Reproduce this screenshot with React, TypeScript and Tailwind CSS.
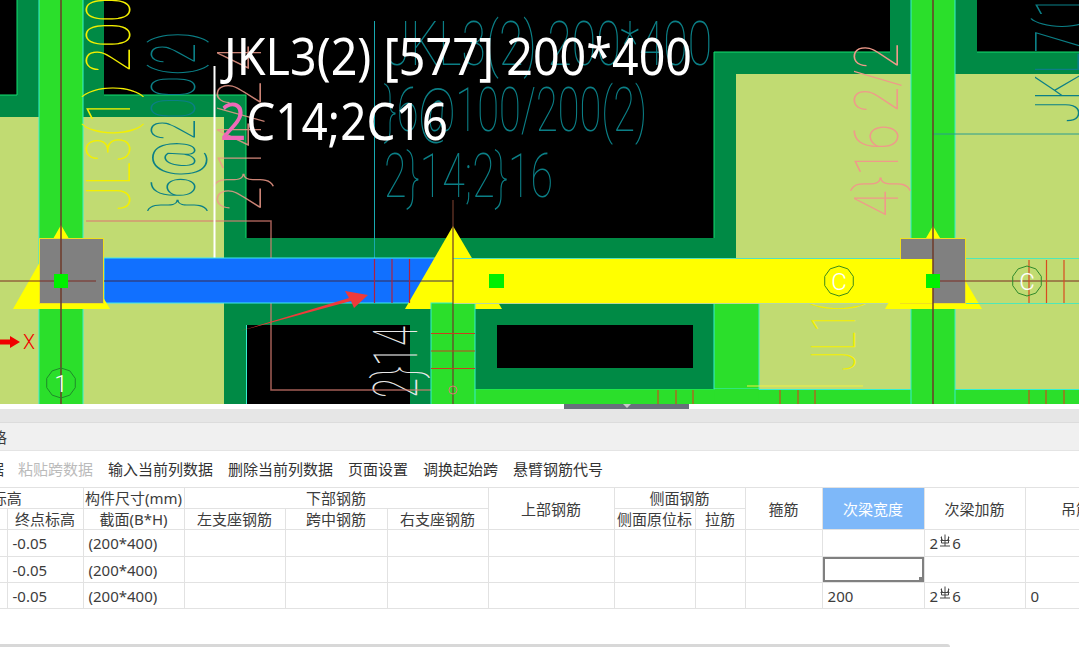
import React from "react";

const TEAL = "#0b7f86";
const SALMON = "#ef9a8a";
const font = "Roboto, 'Liberation Sans', sans-serif";
const bigFont = "'Noto Sans', 'Open Sans', sans-serif";

function Rot({ x, y, len, size, fill, children, opacity = 1 }: { x: number; y: number; len: number; size: number; fill: string; children: string; opacity?: number }) {
  return (
    <text transform={`translate(${x} ${y}) rotate(-90)`} fontFamily={font} fontWeight={100} fontSize={size} fill={fill} opacity={opacity} textLength={len} lengthAdjust="spacingAndGlyphs">
      {children}
    </text>
  );
}

function Flat({ x, y, len, size, fill, children }: { x: number; y: number; len: number; size: number; fill: string; children: string }) {
  return (
    <text x={x} y={y} fontFamily={font} fontWeight={100} fontSize={size} fill={fill} textLength={len} lengthAdjust="spacingAndGlyphs">
      {children}
    </text>
  );
}

function Octagon({ cx, cy, r, stroke }: { cx: number; cy: number; r: number; stroke: string }) {
  const pts = Array.from({ length: 10 }, (_, i) => {
    const a = (i * Math.PI) / 5 + Math.PI / 10;
    return `${cx + r * Math.cos(a)},${cy + r * Math.sin(a)}`;
  }).join(" ");
  return <polygon points={pts} fill="none" stroke={stroke} strokeWidth={1} />;
}

function CadDrawing() {
  const GREEN = "#2bdf2b";
  const DARK = "#008a45";
  const PALE = "#c1db72";
  const CYAN = "#35f0d0";
  const EDGE = "#12e070";
  const LINE = "#6e3a2a";
  return (
    <svg width={1079} height={404} viewBox="0 0 1079 404" className="block">
      <rect width={1079} height={404} fill={DARK} />
      {/* black voids */}
      <polygon points="104,0 890,0 890,52 714,52 714,238 246,238 246,95 104,95" fill="#000" />
      <rect x={0} y={0} width={17} height={95} fill="#000" />
      <rect x={977} y={0} width={102} height={52} fill="#000" />
      <polyline points="0,95 17,95 17,0" fill="none" stroke={EDGE} />
      <polyline points="104,95 246,95 246,238" fill="none" stroke={EDGE} />
      <polyline points="714,238 714,52 890,52" fill="none" stroke={EDGE} />
      <line x1={977} y1={52} x2={1079} y2={52} stroke={EDGE} />
      <rect x={246} y={325} width={164} height={79} fill="#000" />
      <line x1={246.5} y1={325} x2={246.5} y2={404} stroke={CYAN} />
      <rect x={497} y={325} width={196} height={43} fill="#000" />

      {/* pale slabs */}
      <rect x={0} y={117} width={39} height={287} fill={PALE} />
      <rect x={83} y={117} width={141} height={287} fill={PALE} />
      <rect x={736} y={74} width={175} height={184} fill={PALE} />
      <rect x={955} y={74} width={124} height={315} fill={PALE} />
      <rect x={759} y={303} width={152} height={86} fill={PALE} />

      {/* green beams */}
      <rect x={475} y={389} width={604} height={15} fill={GREEN} />
      <rect x={39} y={-2} width={44} height={408} fill={GREEN} stroke={CYAN} />
      <rect x={911} y={-2} width={44} height={408} fill={GREEN} stroke={CYAN} />
      <rect x={714} y={303} width={45} height={86} fill={GREEN} stroke={CYAN} />
      <rect x={714.5} y={389} width={44} height={15} fill={GREEN} />
      <line x1={475} y1={389.5} x2={714} y2={389.5} stroke="#20e848" />
      <line x1={955} y1={389.5} x2={1079} y2={389.5} stroke={CYAN} />
      <line x1={759} y1={389.5} x2={911} y2={389.5} stroke={CYAN} />

      <line x1={933} y1={134} x2={1079} y2={134} stroke="#2a9c90" />

      {/* rotated annotations */}
      <Rot x={130} y={211} len={214} size={62} fill="#f4f000">JL3(1) 200</Rot>
      <Rot x={195} y={211} len={180} size={62} fill={TEAL}>{"}6@200(2)"}</Rot>
      <Rot x={261} y={211} len={165} size={62} fill={SALMON} opacity={0.85}>{"2}14/2 4"}</Rot>
      <Rot x={898} y={217} len={174} size={62} fill={SALMON}>{"4}16 2/2"}</Rot>
      <Rot x={855} y={371} len={70} size={62} fill="#f4f000">JL1(</Rot>
      <Rot x={417} y={398} len={72} size={62} fill="#e8e8e8">{"2}14"}</Rot>
      <Rot x={1079} y={123} len={128} size={62} fill={TEAL}>JKL7(1</Rot>

      {/* horizontal annotations */}
      <Flat x={386} y={65} len={326} size={62} fill={TEAL}>JKL3(2) 200*400</Flat>
      <Flat x={384} y={131} len={263} size={62} fill={TEAL}>{"}6@100/200(2)"}</Flat>
      <Flat x={384} y={197} len={169} size={62} fill={TEAL}>{"2}14;2}16"}</Flat>

      {/* long leaders */}
      <polyline points="86,221 271,221 271,390 449,390" fill="none" stroke="#d97c72" strokeOpacity={0.75} strokeWidth={1.5} />
      <line x1={214.5} y1={66} x2={214.5} y2={258} stroke="#fff" strokeWidth={2} />
      <line x1={374.5} y1={21} x2={374.5} y2={258} stroke="#18a9b0" />

      {/* beam */}
      <rect x={104} y={258} width={350} height={45} fill="#1170ff" stroke="#3fe8f0" />
      {/* left gridline triangle */}
      <polygon points="61,225 13,309 110,309" fill="#ffff00" />
      <rect x={39.5} y={238.5} width={64} height={65} fill="#808080" stroke="#f0e020" />
      {/* middle triangle */}
      <polygon points="453,226 405,309 502,309" fill="#ffff00" />
      <rect x={431} y={303} width={44} height={103} fill={GREEN} stroke={CYAN} />
      <rect x={453} y={259} width={480} height={44} fill="#ffff00" />
      <line x1={453} y1={258.5} x2={933} y2={258.5} stroke="#53e0c0" />
      <line x1={453} y1={303.5} x2={933} y2={303.5} stroke="#b8d8a0" />
      {/* right gridline triangle */}
      <polygon points="933,226 885,309 982,309" fill="#ffff00" />
      <rect x={900.5} y={238.5} width={65} height={65} fill="#808080" stroke="#f0e020" />
      <rect x={900} y={259} width={33} height={44} fill="#ffff00" />
      <line x1={966} y1={258.5} x2={1079} y2={258.5} stroke="#4fe8b8" />
      <line x1={966} y1={303.5} x2={1079} y2={303.5} stroke="#4fe8b8" />

      {/* gridlines */}
      <line x1={61} y1={0} x2={61} y2={404} stroke={LINE} strokeWidth={1.5} />
      <line x1={453} y1={200} x2={453} y2={404} stroke={LINE} strokeWidth={1.2} />
      <line x1={933} y1={0} x2={933} y2={404} stroke={LINE} strokeWidth={1.5} />
      <line x1={0} y1={281} x2={96} y2={281} stroke="#7a2a22" />
      <line x1={104} y1={281} x2={453} y2={281} stroke="#3a2a50" />
      <line x1={940} y1={281} x2={1079} y2={281} stroke="#7a2a22" />

      {/* stirrup ticks */}
      {[374.5, 392, 409.5].map((x) => <line key={x} x1={x} y1={259} x2={x} y2={303} stroke="#b02040" strokeWidth={1.2} />)}
      {[1029, 1046.5, 1064].map((x) => <line key={x} x1={x} y1={260} x2={x} y2={303} stroke="#d84a20" strokeWidth={1.2} />)}
      {[333.5, 351, 368.5].map((y) => <line key={y} x1={431} y1={y} x2={475} y2={y} stroke="#c84020" strokeWidth={1.2} />)}
      {[658, 676, 693, 780, 798, 815, 1029, 1046, 1064].map((x) => <line key={x} x1={x} y1={390} x2={x} y2={404} stroke="#c8501c" strokeWidth={1.2} />)}
      <circle cx={453} cy={390} r={4} fill="none" stroke="#d97c72" />
      <line x1={747} y1={386} x2={863} y2={386} stroke="#f0f040" />

      {/* control points */}
      <rect x={54} y={274} width={14} height={14} fill="#00f000" />
      <rect x={489} y={274} width={15} height={14} fill="#00f000" />
      <rect x={926} y={274} width={14} height={14} fill="#00f000" />

      {/* axis bubbles */}
      <Octagon cx={61} cy={383} r={15} stroke="#1f8a2a" />
      <Octagon cx={839} cy={281} r={15} stroke="#3c8a1a" />
      <Octagon cx={1027} cy={281} r={15} stroke="#2f8a2a" />
      <text x={61} y={392} textAnchor="middle" fontFamily={font} fontSize={24} fontWeight={300} fill="#fff">1</text>
      <text x={839} y={290} textAnchor="middle" fontFamily={font} fontSize={24} fontWeight={300} fill="#fff">C</text>
      <text x={1027} y={290} textAnchor="middle" fontFamily={font} fontSize={24} fontWeight={300} fill="#fff">C</text>

      {/* red annotation arrow */}
      <polygon points="240,331 349,298 345,291 368,295 354,308 351,301" fill="#f03a3a" />

      {/* X axis */}
      <polygon points="0,339.5 10,339.5 10,336 20,342 10,348 10,344.5 0,344.5" fill="#f00000" />
      <text x={23} y={349} fontFamily={font} fontSize={20} fontWeight={300} fill="#f00000" textLength={12} lengthAdjust="spacingAndGlyphs">X</text>

      {/* selected-element tooltip */}
      <text x={224} y={75} fontFamily={bigFont} fontWeight={400} fontSize={51} fill="#fff" textLength={468} lengthAdjust="spacingAndGlyphs">JKL3(2) [577] 200*400</text>
      <text x={220} y={140} fontFamily={bigFont} fontWeight={400} fontSize={51} fill="#fff" textLength={228} lengthAdjust="spacingAndGlyphs">
        <tspan fill="#ee6ab8">2</tspan>C14;2C16
      </text>
    </svg>
  );
}

function RebarSign() {
  return (
    <svg width={12} height={13} viewBox="0 0 12 13" className="inline-block mx-[1px] -translate-y-[3px]" stroke="#444" strokeWidth={1} fill="none">
      <path d="M6 0.5V12M1.5 6.5H10.5M1 12H11M2 3L3.5 6.5M10 3L8.5 6.5M2.5 2.5V9H9.5V2.5" />
    </svg>
  );
}

const cell = "border-r border-b border-[#e2e2e2] p-0 overflow-hidden whitespace-nowrap";
const head = `${cell} text-center font-normal leading-[18px]`;
const data = `${cell} text-left pl-[5px] leading-[18px]`;

function Row({ width, reinf, hanger, selected, tall }: { width?: string; reinf?: boolean; hanger?: string; selected?: boolean; tall?: boolean }) {
  return (
    <tr className={tall ? "h-[27px]" : "h-[26px]"}>
      <td className={data}></td>
      <td className={data}>-0.05</td>
      <td className={data}>(200*400)</td>
      <td className={data}></td>
      <td className={data}></td>
      <td className={data}></td>
      <td className={data}></td>
      <td className={data}></td>
      <td className={data}></td>
      <td className={data}></td>
      <td className={`${data} relative`}>
        {selected ? (
          <>
            <div className="absolute inset-0 border-2 border-[#808080]" />
            <div className="absolute right-0 bottom-0 w-[5px] h-[5px] bg-[#808080]" />
          </>
        ) : (
          width
        )}
      </td>
      <td className={data}>
        {reinf && (
          <span className="inline-flex items-center">
            2<RebarSign />6
          </span>
        )}
      </td>
      <td className={data}>{hanger}</td>
    </tr>
  );
}

export default function App() {
  return (
    <div className="w-[1079px] h-[647px] overflow-hidden bg-white flex flex-col font-['Noto_Sans','Noto_Sans_CJK_SC',sans-serif] text-[#3c3c3c] text-[15px]">
      <CadDrawing />
      <div className="h-[5px] shrink-0 bg-white flex pl-[564px]">
        <div className="w-[125px] h-[5px] bg-[#68707c] flex justify-center">
          <div className="w-0 h-0 border-x-[4px] border-x-transparent border-t-[4px] border-t-[#c8c8c8]" />
        </div>
      </div>
      <div className="h-[14px] shrink-0 bg-[#e6e6e6] border-b border-[#dcdcdc]" />
      <div className="h-[28px] shrink-0 bg-[#f0f0f0] border-b border-[#e4e4e4] flex items-center overflow-hidden">
        <span className="ml-[-8px] translate-y-[1px]">格</span>
      </div>
      <div className="h-[36px] shrink-0 flex items-center overflow-hidden whitespace-nowrap leading-none text-[#333]">
        <span className="ml-[-11px]">据</span>
        <span className="ml-[14px] text-[#bbbbbb]">粘贴跨数据</span>
        <span className="ml-[15px]">输入当前列数据</span>
        <span className="ml-[15px]">删除当前列数据</span>
        <span className="ml-[15px]">页面设置</span>
        <span className="ml-[15px]">调换起始跨</span>
        <span className="ml-[15px]">悬臂钢筋代号</span>
      </div>
      <div className="overflow-hidden flex-1 relative">
        <table className="table-fixed border-collapse ml-[-69px] w-[1196px] border-t border-[#e2e2e2]">
          <colgroup>
            {[76, 76, 101, 101, 102, 101, 126, 81, 50, 77, 102, 101, 102].map((w, i) => (
              <col key={i} width={w} />
            ))}
          </colgroup>
          <thead>
            <tr className="h-[21px]">
              <th colSpan={2} className={head}>标高</th>
              <th className={head}>构件尺寸(mm)</th>
              <th colSpan={3} className={head}>下部钢筋</th>
              <th rowSpan={2} className={head}>上部钢筋</th>
              <th colSpan={2} className={head}>侧面钢筋</th>
              <th rowSpan={2} className={head}>箍筋</th>
              <th rowSpan={2} className={`${head} bg-[#7eb8f9] text-white`}>次梁宽度</th>
              <th rowSpan={2} className={head}>次梁加筋</th>
              <th rowSpan={2} className={head}>吊筋</th>
            </tr>
            <tr className="h-[21px]">
              <th className={head}>起点标高</th>
              <th className={head}>终点标高</th>
              <th className={head}>截面(B*H)</th>
              <th className={head}>左支座钢筋</th>
              <th className={head}>跨中钢筋</th>
              <th className={head}>右支座钢筋</th>
              <th className={head}>侧面原位标</th>
              <th className={head}>拉筋</th>
            </tr>
          </thead>
          <tbody>
            <Row reinf tall />
            <Row selected />
            <Row width="200" reinf hanger="0" />
          </tbody>
        </table>
        <div className="absolute left-0 bottom-0 w-[950px] h-[3px] bg-[#d8d8d8] rounded-tr-[3px]" />
      </div>
    </div>
  );
}
